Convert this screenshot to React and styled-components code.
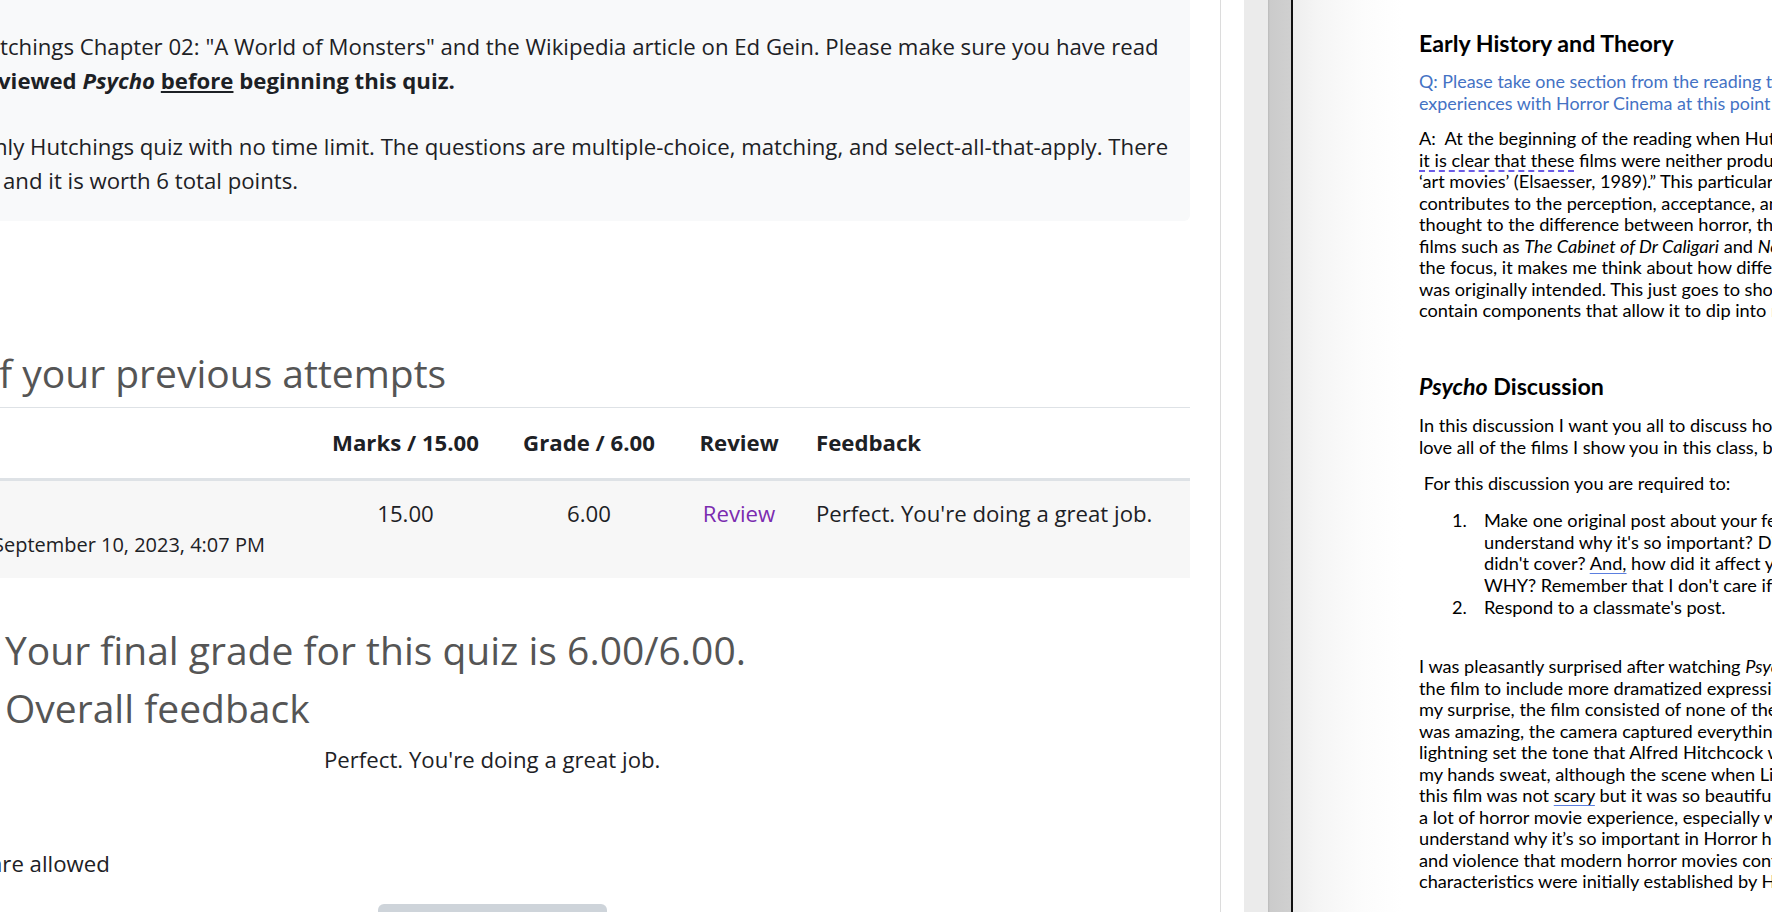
import React from 'react';
import styled, { createGlobalStyle } from 'styled-components';

const GlobalStyle = createGlobalStyle`
  html, body {
    margin: 0;
    padding: 0;
    background: #fff;
    overflow: hidden;
  }
  * {
    box-sizing: border-box;
  }
`;

const Screen = styled.div`
  display: flex;
  width: 1772px;
  height: 912px;
  overflow: hidden;
  background: #fff;
`;

/* ---------- quiz (left) ---------- */

const QuizColumn = styled.main`
  flex: none;
  width: 1190px;
  overflow: hidden;
  font-family: 'Open Sans', 'Liberation Sans', sans-serif;
  font-size: 22.2px;
  line-height: 33.75px;
  color: #1d2125;
`;

const IntroCard = styled.section`
  background: #f8f9fa;
  border-bottom-right-radius: 6px;
  padding: 30px 0 23.5px;
`;

const IntroParagraph = styled.div`
  & + & {
    margin-top: 32.5px;
  }
`;

const IntroLine = styled.div`
  white-space: pre;
  margin-left: ${props => props.$shift || 0}px;
  font-weight: ${props => (props.$bold ? 700 : 400)};
`;

const Heading = styled.h3`
  margin: ${props => props.$top}px 0 0 ${props => props.$shift || 0}px;
  font-size: 39px;
  line-height: 46.8px;
  font-weight: 400;
  color: #555;
  white-space: nowrap;
`;

const AttemptTable = styled.div`
  margin-top: 10.6px;
  border-top: 1px solid #dee2e6;
`;

const Row = styled.div`
  display: grid;
  grid-template-columns: 313px 185px 182px 118px 1fr;
  background: ${props => (props.$striped ? '#f7f7f7' : 'transparent')};
  border-bottom: ${props => (props.$head ? '3px solid #dee2e6' : 'none')};
`;

const Cell = styled.div`
  padding: ${props => (props.$head ? '18px 18px' : '16px 18px 18px')};
  padding-left: ${props => (props.$flush ? 0 : 18)}px;
  text-align: ${props => props.$align || 'left'};
  font-weight: ${props => (props.$head ? 700 : 400)};
  white-space: nowrap;
`;

const StateDetails = styled.div`
  margin-left: ${props => props.$shift}px;
  font-size: 0.9em;
  line-height: 30px;
`;

const ReviewLink = styled.a`
  color: #7b2cb0;
  text-decoration: none;
`;

const FeedbackText = styled.p`
  margin: 11.3px 0 0;
  padding-left: 324px;
  white-space: nowrap;
`;

const AttemptsNote = styled.p`
  margin: 71px 0 0 -10px;
  white-space: nowrap;
`;

const BackButton = styled.button`
  display: block;
  margin: 23px 0 0 378px;
  width: 229px;
  height: 52px;
  border: none;
  border-radius: 6px;
  background: #ced4da;
  font: inherit;
  color: #1d2125;
`;

/* ---------- pdf viewer gutter ---------- */

const Gap = styled.div`
  flex: none;
  width: 30px;
`;

const Divider = styled.div`
  flex: none;
  width: 1px;
  background: #dcdcdc;
`;

const ViewerPad = styled.div`
  flex: none;
  width: 23px;
  background: #fff;
`;

const ViewerTrack = styled.div`
  flex: none;
  width: 24px;
  background: #ebebeb;
`;

const ViewerShade = styled.div`
  flex: none;
  width: 23px;
  background: linear-gradient(to right, #b9b9b9 0, #cbcbcb 2px, #d0d0d0 100%);
`;

const PageEdge = styled.div`
  flex: none;
  width: 2px;
  background: #111;
`;

/* ---------- document page (right) ---------- */

const DocPage = styled.article`
  flex: 1;
  min-width: 0;
  overflow: hidden;
  padding: 29px 0 0 126px;
  background: linear-gradient(to right, #eeeeee 0, #f5f5f5 25px, #fcfcfc 70px, #fff 110px);
  font-family: Lato, 'Noto Sans', sans-serif;
  font-size: 18.2px;
  color: #000;
`;

const DocTitle = styled.h2`
  margin: ${props => props.$top || 0}px 0 0;
  font-size: 23.2px;
  line-height: 28px;
  font-weight: 700;
  white-space: nowrap;
`;

const DocBlock = styled.div`
  margin-top: ${props => props.$top}px;
  line-height: ${props => props.$lh || 21.5}px;
  font-size: ${props => (props.$blue ? '17.9px' : 'inherit')};
  color: ${props => (props.$blue ? '#4472c4' : '#000')};
`;

const DocLine = styled.div`
  white-space: pre;
`;

const ListItem = styled.div`
  display: flex;
  margin-top: ${props => props.$top || 0}px;
`;

const ListNum = styled.span`
  flex: none;
  width: 32px;
  margin-left: 33px;
`;

const GrammarMark = styled.span`
  text-decoration: underline dashed #6b5ce7;
  text-decoration-thickness: 2px;
  text-underline-offset: 4px;
`;

const SpellMark = styled.span`
  text-decoration: underline #5b7fe0;
  text-decoration-thickness: 1px;
  text-underline-offset: 3px;
`;

const answerLines = [
  'A:  At the beginning of the reading when Hutchings discusses the early horror films of the period,',
  null,
  '\u2018art movies\u2019 (Elsaesser, 1989).\u201d This particular point stood out to me because it',
  'contributes to the perception, acceptance, and classification of horror. I had never given much',
  'thought to the difference between horror, thriller and art films before this reading, and',
  null,
  'the focus, it makes me think about how different a film can be perceived from what it',
  'was originally intended. This just goes to show that most films',
  'contain components that allow it to dip into multiple genres at once.',
];

const essayLines = [
  null,
  'the film to include more dramatized expressions of fear and violence, but to',
  'my surprise, the film consisted of none of these things. The cinematography',
  'was amazing, the camera captured everything so perfectly and the',
  'lightning set the tone that Alfred Hitchcock wanted for the audience',
  'my hands sweat, although the scene when Lila finds the mother was',
  null,
  'a lot of horror movie experience, especially with older films, so I',
  'understand why it\u2019s so important in Horror history. Many of the tropes',
  'and violence that modern horror movies contain today and the',
  'characteristics were initially established by Hitchcock in this film.',
];

const Document = () => (
  <DocPage>
    <DocTitle>Early History and Theory</DocTitle>
    <DocBlock $top={13} $lh={22} $blue>
      <DocLine>Q: Please take one section from the reading that you found interesting and relate it to your</DocLine>
      <DocLine>experiences with Horror Cinema at this point in the semester.</DocLine>
    </DocBlock>
    <DocBlock $top={14.25}>
      {answerLines.map((line, i) => {
        if (i === 1) {
          return (
            <DocLine key="a1">
              <GrammarMark>it is clear that these</GrammarMark> films were neither produced nor marketed as horror but as
            </DocLine>
          );
        }
        if (i === 5) {
          return (
            <DocLine key="a5">
              films such as <i>The Cabinet of Dr Caligari</i> and <i>Nosferatu</i> were once seen as art films
            </DocLine>
          );
        }
        return <DocLine key={`a${i}`}>{line}</DocLine>;
      })}
    </DocBlock>

    <DocTitle $top={50.25}>
      <i>Psycho</i> Discussion
    </DocTitle>
    <DocBlock $top={15.25}>
      <DocLine>In this discussion I want you all to discuss how you felt about Psycho. I don&apos;t expect you to</DocLine>
      <DocLine>love all of the films I show you in this class, but I do want you to think about them critically.</DocLine>
    </DocBlock>
    <DocBlock $top={15}>
      <DocLine> For this discussion you are required to:</DocLine>
    </DocBlock>
    <DocBlock $top={15.5}>
      <ListItem>
        <ListNum>1.</ListNum>
        <div>
          <DocLine>Make one original post about your feelings on the film. Did you</DocLine>
          <DocLine>understand why it&apos;s so important? Did it surprise you in ways we</DocLine>
          <DocLine>
            didn&apos;t cover? <SpellMark>And,</SpellMark> how did it affect you as a viewer, and
          </DocLine>
          <DocLine>WHY? Remember that I don&apos;t care if you liked it or not.</DocLine>
        </div>
      </ListItem>
      <ListItem $top={1}>
        <ListNum>2.</ListNum>
        <DocLine>Respond to a classmate&apos;s post.</DocLine>
      </ListItem>
    </DocBlock>
    <DocBlock $top={37.5}>
      {essayLines.map((line, i) => {
        if (i === 0) {
          return (
            <DocLine key="e0">
              I was pleasantly surprised after watching <i>Psycho</i>. I was expecting
            </DocLine>
          );
        }
        if (i === 6) {
          return (
            <DocLine key="e6">
              this film was not <SpellMark>scary</SpellMark> but it was so beautifully made. I don&apos;t have
            </DocLine>
          );
        }
        return <DocLine key={`e${i}`}>{line}</DocLine>;
      })}
    </DocBlock>
    <DocBlock $top={15}>
      <DocLine>To conclude, Psycho is a film that</DocLine>
    </DocBlock>
  </DocPage>
);

const Quiz = () => (
  <QuizColumn>
    <IntroCard>
      <IntroParagraph>
        <IntroLine>
          tchings Chapter 02: &quot;A World of Monsters&quot; and the Wikipedia article on Ed Gein. Please make sure you have read
        </IntroLine>
        <IntroLine $shift={-2} $bold>
          viewed <i>Psycho</i> <u>before</u> beginning this quiz.
        </IntroLine>
      </IntroParagraph>
      <IntroParagraph>
        <IntroLine $shift={-6}>
          nly Hutchings quiz with no time limit. The questions are multiple-choice, matching, and select-all-that-apply. There
        </IntroLine>
        <IntroLine $shift={3}>and it is worth 6 total points.</IntroLine>
      </IntroParagraph>
    </IntroCard>

    <Heading $top={128.6} $shift={-1}>
      f your previous attempts
    </Heading>
    <AttemptTable>
      <Row $head>
        <Cell $head $flush />
        <Cell $head $align="center">Marks / 15.00</Cell>
        <Cell $head $align="center">Grade / 6.00</Cell>
        <Cell $head $align="center">Review</Cell>
        <Cell $head>Feedback</Cell>
      </Row>
      <Row $striped>
        <Cell $flush>
          <div>&nbsp;</div>
          <StateDetails $shift={-7}>September 10, 2023, 4:07 PM</StateDetails>
        </Cell>
        <Cell $align="center">15.00</Cell>
        <Cell $align="center">6.00</Cell>
        <Cell $align="center">
          <ReviewLink href="#review">Review</ReviewLink>
        </Cell>
        <Cell>Perfect. You&apos;re doing a great job.</Cell>
      </Row>
    </AttemptTable>

    <Heading $top={48.6} $shift={5}>
      Your final grade for this quiz is 6.00/6.00.
    </Heading>
    <Heading $top={10.7} $shift={5}>
      Overall feedback
    </Heading>
    <FeedbackText>Perfect. You&apos;re doing a great job.</FeedbackText>
    <AttemptsNote>are allowed</AttemptsNote>
    <BackButton type="button">Back to the course</BackButton>
  </QuizColumn>
);

export default function App() {
  return (
    <>
      <GlobalStyle />
      <Screen>
        <Quiz />
        <Gap />
        <Divider />
        <ViewerPad />
        <ViewerTrack />
        <ViewerShade />
        <PageEdge />
        <Document />
      </Screen>
    </>
  );
}
